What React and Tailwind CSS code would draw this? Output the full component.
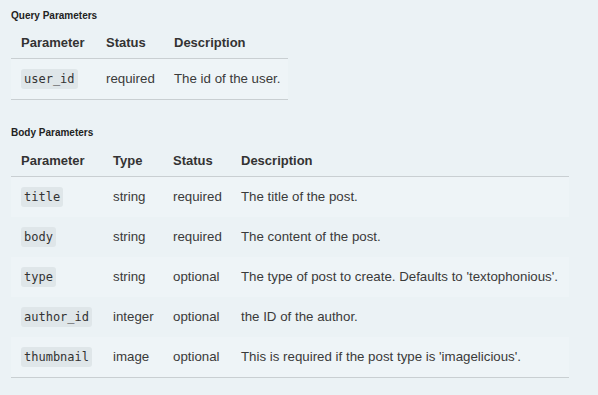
import React from "react";

const F = { fontFamily: '"Liberation Sans", Arial, sans-serif' };

function Code({ children }) {
  return (
    <span className="inline-block rounded-[3px] bg-[#dfe6e9] px-[3px] leading-[20px] text-[12px] text-[#333]" style={{ fontFamily: '"DejaVu Sans Mono", monospace' }}>
      {children}
    </span>
  );
}

export default function App() {
  const body = [
    ["title", "string", "required", "The title of the post."],
    ["body", "string", "required", "The content of the post."],
    ["type", "string", "optional", "The type of post to create. Defaults to 'textophonious'."],
    ["author_id", "integer", "optional", "the ID of the author."],
    ["thumbnail", "image", "optional", "This is required if the post type is 'imagelicious'."],
  ];
  return (
    <div className="min-h-[395px] w-[598px] bg-[#ebf2f5] pl-[11px] pt-[11px] text-[#333]" style={F}>
      <div className="h-[10px] text-[10px] font-bold leading-[10px] text-[#222]">Query Parameters</div>
      <div className="mt-[7px] w-[277px]">
        <div className="flex h-[31px] items-center border-b border-[#c9cfd2] text-[13px] font-bold">
          <div className="w-[95px] pl-[10px]">Parameter</div>
          <div className="w-[68px]">Status</div>
          <div>Description</div>
        </div>
        <div className="flex h-[41px] items-center border-b border-[#c9cfd2] bg-[#eef4f7] text-[13.3px] text-[#3a3a3a]">
          <div className="w-[95px] pl-[10px]"><Code>user_id</Code></div>
          <div className="w-[68px]">required</div>
          <div>The id of the user.</div>
        </div>
      </div>
      <div className="mt-[28px] h-[10px] text-[10px] font-bold leading-[10px] text-[#222]">Body Parameters</div>
      <div className="mt-[8px] w-[558px]">
        <div className="flex h-[31px] items-center border-b border-[#c9cfd2] text-[13px] font-bold">
          <div className="w-[102px] pl-[10px]">Parameter</div>
          <div className="w-[60px]">Type</div>
          <div className="w-[68px]">Status</div>
          <div>Description</div>
        </div>
        {body.map((r, i) => (
          <div key={r[0]} className={"flex h-[40px] items-center text-[13.3px] text-[#3a3a3a] " + (i % 2 === 0 ? "bg-[#eef4f7]" : "bg-[#ebf2f5]")}>
            <div className="w-[102px] pl-[10px]"><Code>{r[0]}</Code></div>
            <div className="w-[60px]">{r[1]}</div>
            <div className="w-[68px]">{r[2]}</div>
            <div>{r[3]}</div>
          </div>
        ))}
        <div className="border-b border-[#c9cfd2]" />
      </div>
    </div>
  );
}
